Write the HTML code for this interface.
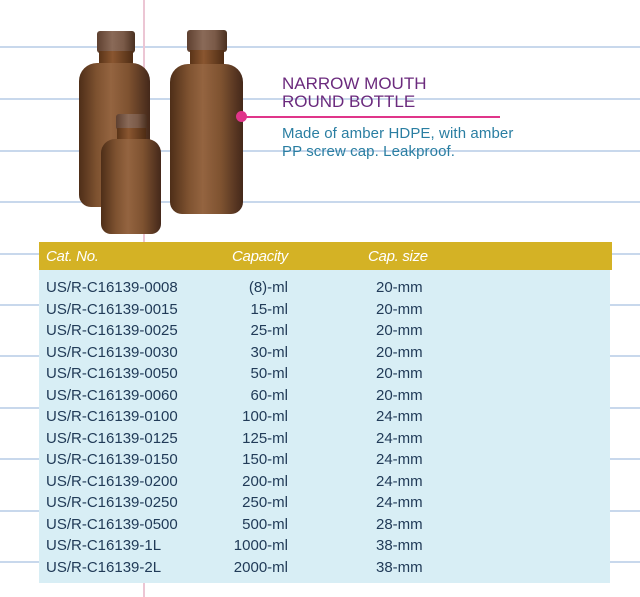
<!DOCTYPE html>
<html><head><style>
body{margin:0;width:640px;height:597px;position:relative;overflow:hidden;background:#fff;font-family:"Liberation Sans",Arial,sans-serif}
.hl{position:absolute;left:0;width:640px;height:2px;background:#c8d8ec}
.vl{position:absolute;left:143px;top:0;width:2px;height:597px;background:#ecc6d4}
.b{position:absolute;border-radius:18px 18px 12px 12px;background:linear-gradient(90deg,#4e2e18 0%,#7e5230 25%,#946440 45%,#7e5230 70%,#44281a 100%)}
.c{position:absolute;border-radius:3px;background:linear-gradient(90deg,#5e4030,#8a6a58 40%,#7a5a48 70%,#4a3020)}
.n{position:absolute;background:linear-gradient(90deg,#5a3418,#8a5630 40%,#4e2c14)}
.t{position:absolute;color:#213b58;font-size:15px;white-space:nowrap}
.h{position:absolute;color:#fff;font-style:italic;font-size:15px;top:248px;letter-spacing:-0.3px}
</style></head><body>
<div class="hl" style="top:46px"></div><div class="hl" style="top:98px"></div><div class="hl" style="top:150px"></div><div class="hl" style="top:201px"></div><div class="hl" style="top:253px"></div><div class="hl" style="top:304px"></div><div class="hl" style="top:355px"></div><div class="hl" style="top:407px"></div><div class="hl" style="top:458px"></div><div class="hl" style="top:510px"></div><div class="hl" style="top:561px"></div>
<div class="vl"></div>
<div class="c" style="left:97px;top:31px;width:38px;height:22px"></div>
<div class="n" style="left:99px;top:51px;width:34px;height:14px"></div>
<div class="b" style="left:79px;top:63px;width:71px;height:144px"></div>
<div class="c" style="left:187px;top:30px;width:40px;height:22px"></div>
<div class="n" style="left:190px;top:50px;width:34px;height:16px"></div>
<div class="b" style="left:170px;top:64px;width:73px;height:150px"></div>
<div class="c" style="left:116px;top:114px;width:31px;height:16px"></div>
<div class="n" style="left:117px;top:128px;width:29px;height:12px"></div>
<div class="b" style="left:101px;top:139px;width:60px;height:95px;border-radius:14px 14px 10px 10px"></div>
<div style="position:absolute;left:236px;top:111px;width:11px;height:11px;border-radius:50%;background:#e0358a"></div>
<div style="position:absolute;left:240px;top:116px;width:260px;height:2px;background:#e0358a"></div>
<div style="position:absolute;left:282px;top:75px;color:#6b2a7d;font-size:17px;line-height:18px">NARROW MOUTH<br>ROUND BOTTLE</div>
<div style="position:absolute;left:282px;top:125px;color:#2a7ea2;font-size:15px;line-height:18px;letter-spacing:0.1px">Made of amber HDPE, with amber<br>PP screw cap. Leakproof.</div>
<div style="position:absolute;left:39px;top:242px;width:573px;height:28px;background:#d4b225"></div>
<div style="position:absolute;left:39px;top:270px;width:571px;height:313px;background:#d8eef5"></div>
<div class="h" style="left:46px">Cat. No.</div>
<div class="h" style="left:232px">Capacity</div>
<div class="h" style="left:368px">Cap. size</div>
<div class="t" style="left:46px;top:279px">US/R-C16139-0008</div><div class="t" style="right:352px;top:279px">(8)-ml</div><div class="t" style="left:376px;top:279px">20-mm</div>
<div class="t" style="left:46px;top:301px">US/R-C16139-0015</div><div class="t" style="right:352px;top:301px">15-ml</div><div class="t" style="left:376px;top:301px">20-mm</div>
<div class="t" style="left:46px;top:322px">US/R-C16139-0025</div><div class="t" style="right:352px;top:322px">25-ml</div><div class="t" style="left:376px;top:322px">20-mm</div>
<div class="t" style="left:46px;top:344px">US/R-C16139-0030</div><div class="t" style="right:352px;top:344px">30-ml</div><div class="t" style="left:376px;top:344px">20-mm</div>
<div class="t" style="left:46px;top:365px">US/R-C16139-0050</div><div class="t" style="right:352px;top:365px">50-ml</div><div class="t" style="left:376px;top:365px">20-mm</div>
<div class="t" style="left:46px;top:387px">US/R-C16139-0060</div><div class="t" style="right:352px;top:387px">60-ml</div><div class="t" style="left:376px;top:387px">20-mm</div>
<div class="t" style="left:46px;top:408px">US/R-C16139-0100</div><div class="t" style="right:352px;top:408px">100-ml</div><div class="t" style="left:376px;top:408px">24-mm</div>
<div class="t" style="left:46px;top:430px">US/R-C16139-0125</div><div class="t" style="right:352px;top:430px">125-ml</div><div class="t" style="left:376px;top:430px">24-mm</div>
<div class="t" style="left:46px;top:451px">US/R-C16139-0150</div><div class="t" style="right:352px;top:451px">150-ml</div><div class="t" style="left:376px;top:451px">24-mm</div>
<div class="t" style="left:46px;top:473px">US/R-C16139-0200</div><div class="t" style="right:352px;top:473px">200-ml</div><div class="t" style="left:376px;top:473px">24-mm</div>
<div class="t" style="left:46px;top:494px">US/R-C16139-0250</div><div class="t" style="right:352px;top:494px">250-ml</div><div class="t" style="left:376px;top:494px">24-mm</div>
<div class="t" style="left:46px;top:516px">US/R-C16139-0500</div><div class="t" style="right:352px;top:516px">500-ml</div><div class="t" style="left:376px;top:516px">28-mm</div>
<div class="t" style="left:46px;top:537px">US/R-C16139-1L</div><div class="t" style="right:352px;top:537px">1000-ml</div><div class="t" style="left:376px;top:537px">38-mm</div>
<div class="t" style="left:46px;top:559px">US/R-C16139-2L</div><div class="t" style="right:352px;top:559px">2000-ml</div><div class="t" style="left:376px;top:559px">38-mm</div>
</body></html>
